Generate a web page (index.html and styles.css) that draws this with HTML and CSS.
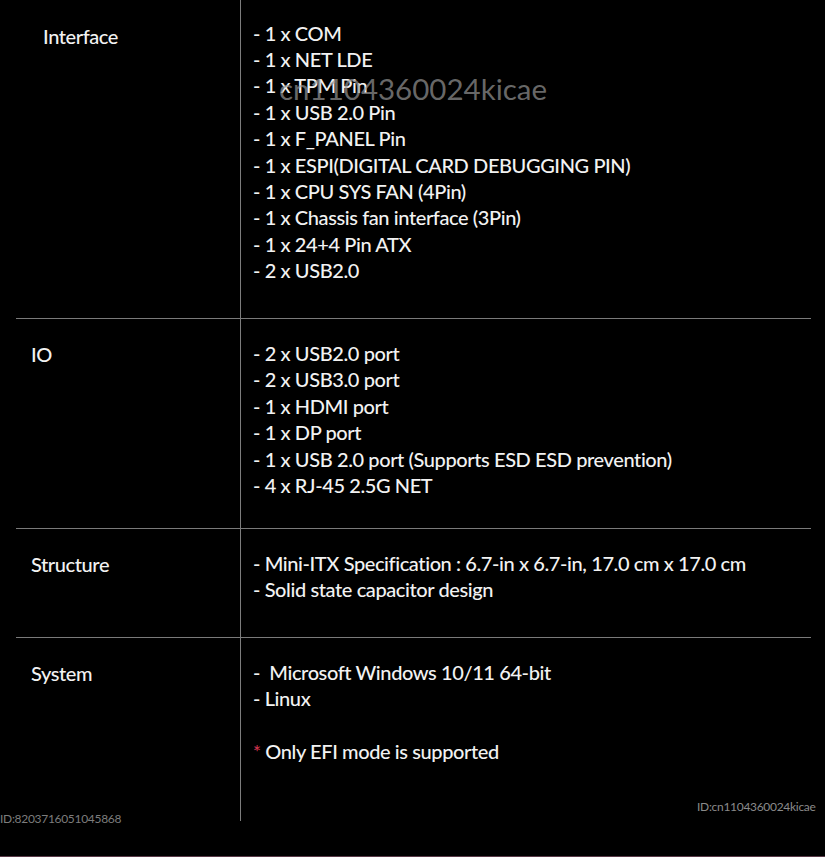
FILE: index.html
```html
<!DOCTYPE html>
<html lang="en">
<head>
<meta charset="utf-8">
<title>Specifications</title>
<link rel="stylesheet" href="styles.css">
</head>
<body>
<main class="spec">
  <section class="row row-interface">
    <div class="label label-interface">Interface</div>
    <ul class="items">
      <li>- 1 x COM</li>
      <li>- 1 x NET LDE</li>
      <li>- 1 x TPM Pin</li>
      <li>- 1 x USB 2.0 Pin</li>
      <li>- 1 x F_PANEL Pin</li>
      <li>- 1 x ESPI(DIGITAL CARD DEBUGGING PIN)</li>
      <li>- 1 x CPU SYS FAN (4Pin)</li>
      <li>- 1 x Chassis fan interface (3Pin)</li>
      <li>- 1 x 24+4 Pin ATX</li>
      <li>- 2 x USB2.0</li>
    </ul>
  </section>
  <section class="row row-io">
    <div class="label">IO</div>
    <ul class="items">
      <li>- 2 x USB2.0 port</li>
      <li>- 2 x USB3.0 port</li>
      <li>- 1 x HDMI port</li>
      <li>- 1 x DP port</li>
      <li>- 1 x USB 2.0 port (Supports ESD ESD prevention)</li>
      <li>- 4 x RJ-45 2.5G NET</li>
    </ul>
  </section>
  <section class="row row-structure">
    <div class="label">Structure</div>
    <ul class="items">
      <li>- Mini-ITX Specification : 6.7-in x 6.7-in, 17.0 cm x 17.0 cm</li>
      <li>- Solid state capacitor design</li>
    </ul>
  </section>
  <section class="row row-system">
    <div class="label">System</div>
    <ul class="items">
      <li>-&nbsp; Microsoft Windows 10/11 64-bit</li>
      <li>- Linux</li>
      <li class="blank">&nbsp;</li>
      <li><span class="star">*</span> Only EFI mode is supported</li>
    </ul>
  </section>
</main>
<div class="watermark">cn1104360024kicae</div>
<div class="id id-left">ID:8203716051045868</div>
<div class="id id-right">ID:cn1104360024kicae</div>
<div class="bottom-line"></div>
</body>
</html>
```

FILE: styles.css
```css
html, body {
  margin: 0;
  padding: 0;
  background: #000;
}
body {
  width: 825px;
  height: 857px;
  position: relative;
  overflow: hidden;
  font-family: Lato, "Open Sans", "Liberation Sans", sans-serif;
  color: #f2f2f2;
}
.spec {
  display: grid;
  grid-template-rows: 318px 210px 109px 184px;
  margin: 0 14px 0 16px;
}
.row {
  display: grid;
  grid-template-columns: 225px 1fr;
}
.row + .row {
  border-top: 1px solid #7a7a7a;
}
.label,
.items {
  font-size: 20px;
  font-weight: 500;
  letter-spacing: -0.4px;
  line-height: 26.4px;
}
.label {
  border-right: 1px solid #7d7d7d;
  padding: 22px 0 0 15px;
}
.label-interface {
  padding-left: 27px;
  padding-top: 23px;
}
.items {
  list-style: none;
  margin: 0;
  padding: 21px 0 0 12px;
}
.row-interface .items {
  padding-top: 19.5px;
}
.row-system .items {
  padding-top: 20.5px;
}
.star {
  color: #c8324c;
  font-size: 19px;
}
.watermark {
  position: absolute;
  left: 279px;
  top: 72px;
  font-size: 29.5px;
  line-height: 34px;
  color: rgba(150, 150, 150, 0.7);
}
.id {
  position: absolute;
  font-size: 12px;
  line-height: 14px;
  color: #7c7c7c;
  letter-spacing: -0.3px;
}
.id-left {
  left: 0;
  top: 812px;
}
.id-right {
  left: 697px;
  top: 800px;
  color: #8a8a8a;
}
.bottom-line {
  position: absolute;
  left: 0;
  right: 0;
  bottom: 0;
  height: 1px;
  background: #5a3a48;
}
```
